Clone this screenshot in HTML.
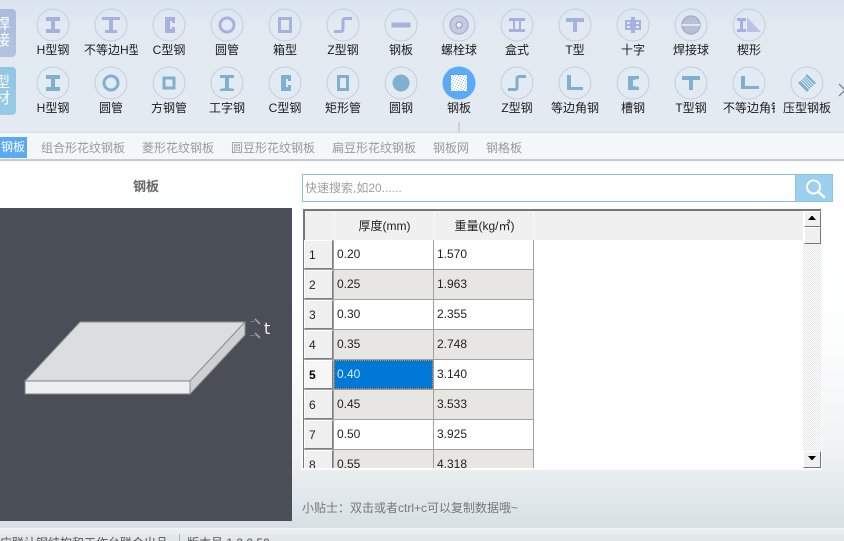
<!DOCTYPE html>
<html lang="zh">
<head>
<meta charset="utf-8">
<title>钢板</title>
<style>
html,body{margin:0;padding:0;width:844px;height:541px;overflow:hidden}
body{background:#fff;font-family:"Liberation Sans","Noto Sans CJK SC",sans-serif;font-size:12px;color:#222}
div,svg,span{position:absolute;box-sizing:border-box}
#root{left:0;top:0;width:844px;height:541px;overflow:hidden}
#top{left:0;top:0;width:844px;height:133px;background:linear-gradient(#d9e3ef,#e2e9f1 18%,#e3eaf2);border-bottom:1px solid #d5dbe2}
#tabs{left:0;top:133px;width:844px;height:28px;background:#f4f7fa;border-bottom:2px solid #c6cbd6}
#main{left:0;top:161px;width:844px;height:367px;background:linear-gradient(#f5f7f9,#fff 2px,#fcfdfd 50%,#eef2f4 80%,#d8e0e4)}
#foot{left:0;top:528px;width:844px;height:13px;background:linear-gradient(#eef1f3,#dfe5e8);border-top:1px solid #f2f4f5;overflow:hidden}
.ic{width:34px;height:34px}
.ic use+use{filter:drop-shadow(.7px .7px 0 #fff)}
.l{width:70px;text-align:center;height:16px;line-height:16px;white-space:nowrap;color:#1c1c1c}
.t{top:140px;height:16px;line-height:16px;color:#999;white-space:nowrap}
.side{left:-10px;width:26px;height:48px;border-radius:4px;color:#fff;font-size:15px;line-height:16px;text-align:right;padding:8px 6px 0 0}
.rh{left:304px;width:29px;height:29px;background:#f0f0f0;border:1px solid;border-color:#fff #7d7d7d #7d7d7d #fff;line-height:29px;padding-left:4px;color:#222}
.c{height:29px;line-height:28px;padding-left:3px;width:99px}
.c1{left:334px}.c2{left:434px;padding-left:3px}
.g{background:#e7e6e3}.w{background:#fff}
.hl{left:304px;width:229px;height:1px;background:#a0a0a0}
.vl{top:240px;width:1px;height:228px;background:#a0a0a0}
</style>
</head>
<body>
<div id="root">
<svg width="0" height="0" style="left:0;top:0">
<defs>
<pattern id="ht" width="5" height="5" patternUnits="userSpaceOnUse"><rect width="5" height="5" fill="#fff"/><path d="M0 0h1v1H0zM2 1h1v1H2zM4 2h1v1H4zM1 3h1v1H1zM3 4h1v1H3z" fill="#8fc4f2"/></pattern>
<pattern id="dt" width="2" height="2" patternUnits="userSpaceOnUse"><rect width="2" height="2" fill="#fff"/><rect width="1" height="1" fill="#e6e6e6"/><rect x="1" y="1" width="1" height="1" fill="#e6e6e6"/></pattern>
<symbol id="ring" viewBox="-17 -17 34 34"><circle r="16" fill="none" stroke="#c2cee0"/></symbol>
<symbol id="I" viewBox="-17 -17 34 34"><path d="M-7-8H7V-4H2V4H7V8H-7V4H-2V-4H-7Z"/></symbol>
<symbol id="UH" viewBox="-17 -17 34 34"><path d="M-9-8H9V-5H2V5H6V8H-6V5H-2V-5H-9Z"/></symbol>
<symbol id="C" viewBox="-17 -17 34 34"><path d="M-4-8H6V-2H3V-4H1V4H3V2H6V8H-4Z"/></symbol>
<symbol id="O" viewBox="-17 -17 34 34"><circle r="7" fill="none" stroke="currentColor" stroke-width="3"/></symbol>
<symbol id="B" viewBox="-17 -17 34 34"><rect x="-5.500" y="-6.500" width="11" height="13" fill="none" stroke="currentColor" stroke-width="3"/></symbol>
<symbol id="Z" viewBox="-17 -17 34 34"><path d="M-9 6.500H-2Q0 6.500 0 4V-4Q0-6.500 2-6.500H9" fill="none" stroke="currentColor" stroke-width="3"/></symbol>
<symbol id="P" viewBox="-17 -17 34 34"><rect x="-9.500" y="-2.500" width="19" height="5"/></symbol>
<symbol id="BT" viewBox="-17 -17 34 34"><circle r="9" fill="#c6cce2" stroke="#a9b2d8" stroke-width="1.500"/><circle r="3" fill="#eef0f6" stroke="#8d97bd"/></symbol>
<symbol id="BX" viewBox="-17 -17 34 34"><path d="M-8-7H8V-4H4V4H8V7H-8V4H-4V-4H-8ZM-2-4V4H2V-4Z" fill-rule="evenodd"/></symbol>
<symbol id="T" viewBox="-17 -17 34 34"><path d="M-9-7H9V-3H2V7H-2V-3H-9Z"/></symbol>
<symbol id="X" viewBox="-17 -17 34 34"><path d="M-8-5H-2V-8H2V-5H8V5H2V8H-2V5H-8ZM-6-3V-1H-3V-3ZM3-3V-1H6V-3ZM-6 1V3H-3V1ZM3 1V3H6V1Z" fill-rule="evenodd"/></symbol>
<symbol id="W" viewBox="-17 -17 34 34"><circle r="9" fill="#b8c0d4" stroke="#a3aed0" stroke-width="1.500"/><rect x="-9" y="-.800" width="18" height="1.500" fill="#f0f2f7"/></symbol>
<symbol id="WG" viewBox="-17 -17 34 34"><path d="M-12-7H-3V-4H-6V4H-3V7H-12V4H-9V-4H-12Z"/><path d="M-2-8V7H12Z" fill="#b9c3ea"/></symbol>
<symbol id="BS" viewBox="-17 -17 34 34"><rect x="-5" y="-5" width="10" height="10" fill="none" stroke="currentColor" stroke-width="3"/></symbol>
<symbol id="I2" viewBox="-17 -17 34 34"><path d="M-7-8H7V-5H2V5L7 6V8H-7V6L-2 5V-5H-7Z"/></symbol>
<symbol id="R" viewBox="-17 -17 34 34"><rect x="-4.500" y="-6.500" width="9" height="13" fill="none" stroke="currentColor" stroke-width="3"/></symbol>
<symbol id="F" viewBox="-17 -17 34 34"><circle r="8.500"/></symbol>
<symbol id="L" viewBox="-17 -17 34 34"><path d="M-8-8H-4V4H8V7H-8Z"/></symbol>
<symbol id="CH" viewBox="-17 -17 34 34"><path d="M-5-7H6V-4L0-3V3L6 4V7H-5Z"/></symbol>
<symbol id="LU" viewBox="-17 -17 34 34"><path d="M-8-7H-4V3H10V6H-8Z"/></symbol>
<symbol id="H" viewBox="-17 -17 34 34"><path d="M0-9 9 0 0 9-9 0Z"/><path d="M-6-5 5 6M-4.500-6.500 6.500 4.500M-3-8 8 3M-7.500-3.500 3.500 7.500" stroke="#fff" stroke-width=".7"/></symbol>
</defs>
</svg>

<div id="top"></div>
<div class="side" style="top:9px;background:linear-gradient(#a9bcdd,#b1c3e0)">焊<br>接</div>
<div class="side" style="top:67px;background:linear-gradient(#8fc5e6,#98cbe6)">型<br>材</div>

<!-- row 1 icons -->
<svg class="ic" style="left:36px;top:8px;color:#a6b1e0;fill:#a6b1e0"><use href="#ring"/><use href="#I"/></svg>
<svg class="ic" style="left:94px;top:8px;color:#a6b1e0;fill:#a6b1e0"><use href="#ring"/><use href="#UH"/></svg>
<svg class="ic" style="left:152px;top:8px;color:#a6b1e0;fill:#a6b1e0"><use href="#ring"/><use href="#C"/></svg>
<svg class="ic" style="left:210px;top:8px;color:#a6b1e0;fill:#a6b1e0"><use href="#ring"/><use href="#O"/></svg>
<svg class="ic" style="left:268px;top:8px;color:#a6b1e0;fill:#a6b1e0"><use href="#ring"/><use href="#B"/></svg>
<svg class="ic" style="left:326px;top:8px;color:#a6b1e0;fill:#a6b1e0"><use href="#ring"/><use href="#Z"/></svg>
<svg class="ic" style="left:384px;top:8px;color:#a6b1e0;fill:#a6b1e0"><use href="#ring"/><use href="#P"/></svg>
<svg class="ic" style="left:442px;top:8px;color:#a6b1e0;fill:#a6b1e0"><use href="#ring"/><use href="#BT"/></svg>
<svg class="ic" style="left:500px;top:8px;color:#a6b1e0;fill:#a6b1e0"><use href="#ring"/><use href="#BX"/></svg>
<svg class="ic" style="left:558px;top:8px;color:#a6b1e0;fill:#a6b1e0"><use href="#ring"/><use href="#T"/></svg>
<svg class="ic" style="left:616px;top:8px;color:#a6b1e0;fill:#a6b1e0"><use href="#ring"/><use href="#X"/></svg>
<svg class="ic" style="left:674px;top:8px;color:#a6b1e0;fill:#a6b1e0"><use href="#ring"/><use href="#W"/></svg>
<svg class="ic" style="left:732px;top:8px;color:#a6b1e0;fill:#a6b1e0"><use href="#ring"/><use href="#WG"/></svg>

<div class="l" style="left:18px;top:42px">H型钢</div>
<div class="l" style="left:84px;top:42px;width:54px;overflow:hidden;text-align:left">不等边H型钢</div>
<div class="l" style="left:134px;top:42px">C型钢</div>
<div class="l" style="left:192px;top:42px">圆管</div>
<div class="l" style="left:250px;top:42px">箱型</div>
<div class="l" style="left:308px;top:42px">Z型钢</div>
<div class="l" style="left:366px;top:42px">钢板</div>
<div class="l" style="left:424px;top:42px">螺栓球</div>
<div class="l" style="left:482px;top:42px">盒式</div>
<div class="l" style="left:540px;top:42px">T型</div>
<div class="l" style="left:598px;top:42px">十字</div>
<div class="l" style="left:656px;top:42px">焊接球</div>
<div class="l" style="left:714px;top:42px">楔形</div>

<!-- row 2 icons -->
<svg class="ic" style="left:36px;top:66px;color:#7fb0d0;fill:#7fb0d0"><use href="#ring"/><use href="#I"/></svg>
<svg class="ic" style="left:94px;top:66px;color:#7fb0d0;fill:#7fb0d0"><use href="#ring"/><use href="#O"/></svg>
<svg class="ic" style="left:152px;top:66px;color:#7fb0d0;fill:#7fb0d0"><use href="#ring"/><use href="#BS"/></svg>
<svg class="ic" style="left:210px;top:66px;color:#7fb0d0;fill:#7fb0d0"><use href="#ring"/><use href="#I2"/></svg>
<svg class="ic" style="left:268px;top:66px;color:#7fb0d0;fill:#7fb0d0"><use href="#ring"/><use href="#C"/></svg>
<svg class="ic" style="left:326px;top:66px;color:#7fb0d0;fill:#7fb0d0"><use href="#ring"/><use href="#R"/></svg>
<svg class="ic" style="left:384px;top:66px;color:#7fb0d0;fill:#7fb0d0"><use href="#ring"/><use href="#F"/></svg>
<svg class="ic" style="left:442px;top:66px" viewBox="-17 -17 34 34"><circle r="16.500" fill="#5aaaf7"/><rect x="-8" y="-8" width="16" height="16" fill="url(#ht)"/></svg>
<svg class="ic" style="left:500px;top:66px;color:#7fb0d0;fill:#7fb0d0"><use href="#ring"/><use href="#Z"/></svg>
<svg class="ic" style="left:558px;top:66px;color:#7fb0d0;fill:#7fb0d0"><use href="#ring"/><use href="#L"/></svg>
<svg class="ic" style="left:616px;top:66px;color:#7fb0d0;fill:#7fb0d0"><use href="#ring"/><use href="#CH"/></svg>
<svg class="ic" style="left:674px;top:66px;color:#7fb0d0;fill:#7fb0d0"><use href="#ring"/><use href="#T"/></svg>
<svg class="ic" style="left:732px;top:66px;color:#7fb0d0;fill:#7fb0d0"><use href="#ring"/><use href="#LU"/></svg>
<svg class="ic" style="left:790px;top:66px;color:#7fb0d0;fill:#7fb0d0"><use href="#ring"/><use href="#H"/></svg>

<div class="l" style="left:18px;top:100px">H型钢</div>
<div class="l" style="left:76px;top:100px">圆管</div>
<div class="l" style="left:134px;top:100px">方钢管</div>
<div class="l" style="left:192px;top:100px">工字钢</div>
<div class="l" style="left:250px;top:100px">C型钢</div>
<div class="l" style="left:308px;top:100px">矩形管</div>
<div class="l" style="left:366px;top:100px">圆钢</div>
<div class="l" style="left:424px;top:100px">钢板</div>
<div class="l" style="left:482px;top:100px">Z型钢</div>
<div class="l" style="left:540px;top:100px">等边角钢</div>
<div class="l" style="left:598px;top:100px">槽钢</div>
<div class="l" style="left:656px;top:100px">T型钢</div>
<div class="l" style="left:723px;top:100px;width:52px;overflow:hidden;text-align:left">不等边角钢</div>
<div class="l" style="left:772px;top:100px">压型钢板</div>

<svg style="left:838px;top:82px" width="6" height="16"><path d="M1 2 7 8 1 14" fill="none" stroke="#6a7a90" stroke-width="1.200"/></svg>
<div style="left:458px;top:122px;width:2px;height:11px;background:#ccd3dc"></div>

<div id="tabs"></div>
<div style="left:0;top:137px;width:27px;height:21px;background:#5aa9f5;color:#fff;line-height:21px;text-align:right;padding-right:2px">钢板</div>
<div class="t" style="left:41px">组合形花纹钢板</div>
<div class="t" style="left:142px">菱形花纹钢板</div>
<div class="t" style="left:231px">圆豆形花纹钢板</div>
<div class="t" style="left:332px">扁豆形花纹钢板</div>
<div class="t" style="left:433px">钢板网</div>
<div class="t" style="left:486px">钢格板</div>

<div id="main"></div>
<div style="left:0;top:179px;width:292px;height:16px;line-height:16px;text-align:center;font-weight:bold;font-size:13px;color:#666">钢板</div>
<div style="left:0;top:208px;width:292px;height:313px;background:#4a4e57"></div>
<svg style="left:0;top:300px" width="290" height="110">
<polygon points="25,81 80,22 245,22 190,81" fill="#dcdddf" stroke="#8d8e90"/>
<polygon points="25,81 190,81 190,94 25,94" fill="#eeeff0" stroke="#7f8082"/>
<polygon points="190,81 245,22 245,35 190,94" fill="#cfd0d2" stroke="#8d8e90"/>
<path d="M250 21.500H255M250 35.500H255" stroke="#777a80" stroke-width="1"/>
<path d="M255 19 260 24M255 33 260 38" fill="none" stroke="#a8aaad" stroke-width="1.500"/>
<text x="264" y="34" font-family="DejaVu Sans" font-size="16" fill="#f2f2f2">t</text>
</svg>

<!-- search -->
<div style="left:302px;top:174px;width:494px;height:28px;background:#fff;border:1px solid #8fbbdc;border-right:0;line-height:26px;padding-left:2px;color:#a0a0a0">快速搜索,如20......</div>
<div style="left:795px;top:174px;width:38px;height:28px;background:#9dd0ee;border:1px solid #8fc2e2"></div>
<svg style="left:804px;top:177px" width="22" height="22"><circle cx="9.500" cy="10" r="6.500" fill="none" stroke="#fff" stroke-width="2"/><path d="M14.500 15 20 20" stroke="#fff" stroke-width="2.500" stroke-linecap="round"/></svg>

<!-- table -->
<div style="left:301px;top:207px;width:521px;height:262px;background:#fafbfc"></div>
<div style="left:303px;top:209px;width:518px;height:259px;background:#fff;overflow:hidden;border-top:2px solid #777;border-left:2px solid #777"></div>
<div style="left:305px;top:211px;width:498px;height:29px;background:#f0f0f0"></div>
<div style="left:334px;top:211px;width:1px;height:29px;background:#f8f8f8"></div>
<div style="left:434px;top:211px;width:1px;height:29px;background:#f8f8f8"></div>
<div style="left:533px;top:211px;width:1px;height:29px;background:#f8f8f8"></div>
<div style="left:335px;top:218px;width:99px;height:16px;line-height:16px;text-align:center">厚度(mm)</div>
<div style="left:435px;top:218px;width:99px;height:16px;line-height:16px;text-align:center">重量(kg/㎡)</div>

<div class="rh" style="top:240px">1</div>
<div class="c c1 w" style="top:240px">0.20</div><div class="c c2 w" style="top:240px">1.570</div>
<div class="rh" style="top:270px">2</div>
<div class="c c1 g" style="top:270px">0.25</div><div class="c c2 g" style="top:270px">1.963</div>
<div class="rh" style="top:300px">3</div>
<div class="c c1 w" style="top:300px">0.30</div><div class="c c2 w" style="top:300px">2.355</div>
<div class="rh" style="top:330px">4</div>
<div class="c c1 g" style="top:330px">0.35</div><div class="c c2 g" style="top:330px">2.748</div>
<div class="rh" style="top:360px;font-weight:bold;color:#000;background:#f6f6f6">5</div>
<div class="c c1" style="top:360px;background:#0078d7;color:#dfeefa;border:1px dotted #e8892c;line-height:26px;padding-left:2px">0.40</div><div class="c c2 w" style="top:360px">3.140</div>
<div class="rh" style="top:390px">6</div>
<div class="c c1 g" style="top:390px">0.45</div><div class="c c2 g" style="top:390px">3.533</div>
<div class="rh" style="top:420px">7</div>
<div class="c c1 w" style="top:420px">0.50</div><div class="c c2 w" style="top:420px">3.925</div>
<div class="rh" style="top:450px;height:18px;border-bottom:0">8</div>
<div class="c c1 g" style="top:450px;height:18px;overflow:hidden">0.55</div><div class="c c2 g" style="top:450px;height:18px;overflow:hidden">4.318</div>

<div class="hl" style="top:269px"></div><div class="hl" style="top:299px"></div><div class="hl" style="top:329px"></div><div class="hl" style="top:359px"></div><div class="hl" style="top:389px"></div><div class="hl" style="top:419px"></div><div class="hl" style="top:449px"></div>
<div class="vl" style="left:333px"></div><div class="vl" style="left:433px"></div><div class="vl" style="left:533px"></div>

<!-- scrollbar -->
<svg style="left:803px;top:243px" width="18" height="208"><rect width="18" height="208" fill="url(#dt)"/></svg>
<div style="left:804px;top:211px;width:17px;height:16px;background:#f0f0f0;border:1px solid;border-color:#fff #777 #777 #fff"></div>
<svg style="left:807px;top:215px" width="10" height="7"><path d="M4.500 1H5.500L9 5H1Z" fill="#000"/></svg>
<div style="left:804px;top:227px;width:17px;height:17px;background:#f0f0f0;border:1px solid;border-color:#fff #777 #777 #fff"></div>
<div style="left:803px;top:451px;width:18px;height:17px;background:#f0f0f0;border:1px solid;border-color:#fff #777 #777 #fff"></div>
<svg style="left:807px;top:455px" width="10" height="7"><path d="M1 1H9L5.500 5H4.500Z" fill="#000"/></svg>
<div style="left:301px;top:468px;width:521px;height:2px;background:#fbfcfc"></div>

<div style="left:302px;top:500px;height:16px;line-height:16px;color:#777;white-space:nowrap">小贴士：双击或者ctrl+c可以复制数据哦~</div>

<div id="foot"></div>
<div style="left:0;top:535px;height:16px;line-height:16px;color:#555;white-space:nowrap">应联计钢结构和工作台联合出品</div>
<div style="left:179px;top:534px;width:1px;height:7px;background:#aab0b5"></div>
<div style="left:187px;top:535px;height:16px;line-height:16px;color:#555;white-space:nowrap">版本号 1.2.0.50</div>
</div>
</body>
</html>
